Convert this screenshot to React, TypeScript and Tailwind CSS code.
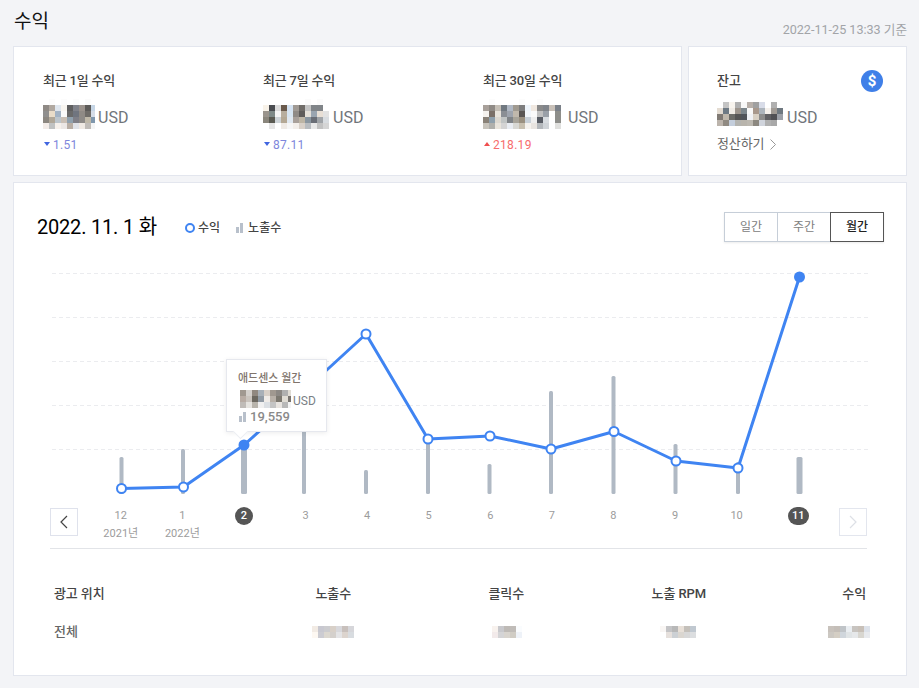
const FONT = "[font-family:Roboto,'Noto_Sans_CJK_KR','Noto_Sans',sans-serif]";

function Mosaic({ rows, className = "" }: { rows: string[]; className?: string }) {
  const parsed = rows.map((r) => r.split(" "));
  return (
    <div className={`flex flex-col shrink-0 overflow-hidden ${className}`}>
      {parsed.map((cells, i) => (
        <div key={i} className="flex">
          {cells.map((c, j) => (
            <div key={j} className="w-[6px] h-[6px] shrink-0" style={{ backgroundColor: `#${c}` }} />
          ))}
        </div>
      ))}
    </div>
  );
}

const m1 = [
  "fff fcfcfc fff fcfcfc fff fcfcfc fff fbfbfb fff",
  "8f8a85 b0a8a0 dfe6ee f8f5f0 5f5f60 80828a 9a928c 5c5a58 c5d5e5",
  "908f8e e9dcc8 a3b3c4 fafafa 6a6a6a 70757f 8f8a85 6f6c68 d5dde8",
  "8c8780 b0a798 bcc5cc c9bfb5 8fa0ad 7f7f87 8d8a87 bfb8a8 7f97ad",
  "f3ece8 c0c2c2 f5f0eb ebe7e5 b8aea5 dfe2e8 efe9e3 c0bcb8 f5f5f5",
];
const m2 = [
  "fff fff fff fff fff fff fff fbfbfb fff fbfbfb fff",
  "f8f2e8 4a4c50 dcdcdc 6a5a4c d5e3f2 a09a94 706c68 c4c4c4 808488 808488 fff",
  "9a948c 7f8a88 f5f5f5 b8ae9e d8e6f2 8f8a85 5f5c5a e5e0d8 9aa5b0 e8dfd5 e2e2e2",
  "8a867c 5a5a52 ced4d8 b4a894 e0e8f0 a8a09a bdb5a5 8a96a0 6a6e76 a0a4a8 d8dce0",
  "fff e5e5e5 fff efeae5 f6f6f6 f2eeea d8d0c8 b8bcc0 e8e8e8 c2c2c2 d5d5d5",
];
const m3 = [
  "fff fcfcfc fff fff fff fff fcfcfc fff fff fcfcfc fff fff fff",
  "a8a09a 8f8a85 c5bfb6 707880 b0b8c4 a09a90 7d7d7d eef4fa f0e8e0 8a8a8a 80848a c8c0b8 7a8088",
  "f5f2ee 7a7068 e8e4dc 8a8e94 9ea4ae c0b8ac 5a5654 f2f6fa fafafa c0c0c0 9aa0a8 fff 8e8e8a",
  "8a8278 8fa0ac dcd8d0 c0c4c4 808488 a8a49a 9a9080 c8d0d8 eeeeee 585c64 d8dce0 fff 8e8e8a",
  "c8c4bc b0b0ac e8e4dc d4d4d4 e8ecf2 d8d8d4 c8c0b0 f5f2ee e8e4e0 b4b8bc d0d4d8 fff e0e0de",
];
const m4 = [
  "fff c4c4c4 f8f4ee b0b0b0 f8f8f8 b8b0aa a0a0a0 d8dce8 fff b0b0b0 fff",
  "e4dcd2 6e7a84 f0ece6 9c948c 7c868c f8f8f8 a8988c acb4bc f4f0ec a09a94 6e7880",
  "807a74 c0b8ac 6c6c68 545454 50545a f0f2f6 d8d0c4 8c8c8c 606064 505054 9ca0a8",
  "bcb4ac 908a82 c4cedc b4b4b0 b8b4ac bcb8b0 8c8880 d0d4dc b0b0b0 a8a8a8 fff",
];
const mTip = [
  "a09890 d4d0cc 908880 a8b0b8 d8d0c8 a09890 8c8884 b0b0b0 e0dcd4",
  "b8aca4 cac4be 6c6860 909aa4 f0ece8 b8b0a8 7c7870 e0dcd4 787470",
  "c0bcb8 e6e4e0 b8b4ac f0f0f0 dce0e4 c4c4c4 e8e4e0 b8b8b8 f4f4f4",
];
const t1 = ["f2ebe4 c8c8d0 cccccf d8d0c8 d8d8dc c8c0bc d6d6da", "fdf8f2 ccccd2 dcd8d0 d4d0cc e4e4e6 dcd4ce d8dce0"];
const t2 = ["f8f2ee c8c8cc bebab6 c0bcb8 fafcfe", "f2eaea d4d4d6 d8d4ce d0ccc4 eef2f8"];
const t3 = ["f9f6f4 c4c4c6 b8b8b8 e8e0d8 c4c0ba c0c8d0", "fff e6e0dc ccd0d4 dad6d0 d8d8d8 dcdee0"];
const t4 = ["c8c2bc c4beb8 c0c4c8 eaeef2 c8c4c0 c8c0b8 dde2ea", "ccc8c2 d4cec4 d0d6dc e0e4e6 e6e8ea d8d6d0 e8eaee"];

function Tri({ up, className }: { up?: boolean; className: string }) {
  return (
    <svg width="6" height="4" viewBox="0 0 6 4" className={className}>
      <path d={up ? "M3 0L6 4H0Z" : "M0 0H6L3 4Z"} fill="currentColor" />
    </svg>
  );
}

function Stat({ title, rows, mw, gap, delta, up, w }: { title: string; rows: string[]; mw?: string; gap: string; delta: string; up?: boolean; w: string }) {
  return (
    <div className={`flex flex-col ${w}`}>
      <div className="text-[13px] leading-[20px] font-medium tracking-[-0.2px] text-[#444444]">{title}</div>
      <div className="flex items-center mt-[8px] h-[30px]">
        <Mosaic rows={rows} className={mw} />
        <span className={`text-[16px] leading-[20px] text-[#70757a] mt-[8px] ${gap}`}>USD</span>
      </div>
      <div className={`flex items-center gap-[3px] mt-[7px] text-[12px] leading-[18px] tracking-[0.3px] ${up ? "text-[#f76c6c]" : "text-[#7e86dc]"}`}>
        <Tri up={up} className={up ? "text-[#f04f4f] mb-[2px] ml-[1px]" : "text-[#4166e0] mb-[2px] ml-[1px]"} />
        <span>{delta}</span>
      </div>
    </div>
  );
}

const pts: [number, number][] = [
  [71.5, 226.5], [133.5, 225], [194, 183], [255, 128], [316, 72], [378, 177],
  [440, 174], [501, 187], [564, 169.5], [626, 199], [688, 206], [749.5, 15],
];
const bars: [number, number, number][] = [
  [71.5, 195, 4], [133, 187, 4], [194, 183, 6], [254, 168, 4], [316, 208, 4], [378, 178, 4],
  [439.5, 202, 4], [501, 129, 4], [563.5, 114, 4], [625.5, 182, 4], [688, 200, 4], [749.5, 195, 6],
];

function Chart() {
  return (
    <svg width="818" height="240" viewBox="0 0 818 240" className="block">
      {[11, 55, 99, 143, 187].map((y) => (
        <line key={y} x1="2" x2="818" y1={y + 0.5} y2={y + 0.5} stroke="#ebecef" strokeDasharray="4 3" />
      ))}
      {bars.map(([x, top, w], i) => (
        <rect key={i} x={x - w / 2} y={top} width={w} height={232 - top} rx="1.5" fill="#b0b9c4" />
      ))}
      <polyline points={pts.map((p) => p.join(",")).join(" ")} fill="none" stroke="#3f84f2" strokeWidth="3" strokeLinejoin="round" />
      {pts.map(([x, y], i) =>
        i === 3 ? null : i === 2 || i === 11 ? (
          <circle key={i} cx={x} cy={y} r="5.5" fill="#3f84f2" />
        ) : (
          <circle key={i} cx={x} cy={y} r="4.5" fill="#fff" stroke="#3f84f2" strokeWidth="2" />
        )
      )}
    </svg>
  );
}

function Chevron({ left, color }: { left?: boolean; color: string }) {
  return (
    <svg width="8" height="14" viewBox="0 0 8 14" fill="none" stroke={color} strokeWidth="1.2">
      <path d={left ? "M7 1L1 7L7 13" : "M1 1L7 7L1 13"} />
    </svg>
  );
}

const labels: { n: string; y?: string; active?: boolean }[] = [
  { n: "12", y: "2021년" }, { n: "1", y: "2022년" }, { n: "2", active: true }, { n: "3" }, { n: "4" }, { n: "5" },
  { n: "6" }, { n: "7" }, { n: "8" }, { n: "9" }, { n: "10" }, { n: "11", active: true },
];

const cols = [
  { t: "노출수", w: "w-[297px]", rows: t1, m: "-mr-[3px]" },
  { t: "클릭수", w: "w-[173px]", rows: t2, m: "mr-[2px]" },
  { t: "노출 RPM", w: "w-[182px]", rows: t3, m: "mr-[10px]" },
  { t: "수익", w: "w-[160px]", rows: t4, m: "-mr-[4px]" },
];

export default function App() {
  return (
    <div className={`${FONT} w-[919px] h-[688px] overflow-hidden bg-[#f3f4f7] pl-[13px] pr-[12px] flex flex-col`}>
      <div className="flex justify-between h-[46px] shrink-0">
        <h1 className="text-[19px] leading-[28px] pt-[8px] pl-[1px] font-normal text-[#111111]">수익</h1>
        <span className="text-[12.6px] leading-[18px] pt-[21px] text-[#a2a4a8]">2022-11-25 13:33 기준</span>
      </div>

      <div className="flex gap-[6px] h-[130px] shrink-0">
        <div className="w-[669px] bg-white border border-[#e3e6ee] pl-[29px] pt-[24px] flex">
          <Stat title="최근 1일 수익" rows={m1} mw="w-[52px]" gap="ml-[3px]" delta="1.51" w="w-[220px]" />
          <Stat title="최근 7일 수익" rows={m2} gap="ml-[4px]" delta="87.11" w="w-[220px]" />
          <Stat title="최근 30일 수익" rows={m3} gap="ml-[7px]" delta="218.19" up w="w-[180px]" />
        </div>
        <div className="relative w-[219px] bg-white border border-[#e3e6ee] pl-[28px] pt-[24px] flex flex-col">
          <div className="text-[13px] leading-[20px] font-medium text-[#444444]">잔고</div>
          <div className="flex items-center mt-[8px] h-[30px]">
            <Mosaic rows={m4} />
            <span className="text-[16px] leading-[20px] text-[#70757a] ml-[4px] mt-[8px]">USD</span>
          </div>
          <div className="flex items-center gap-[6px] mt-[6px] text-[13px] leading-[18px] tracking-[-0.1px] text-[#666666]">
            <span>정산하기</span>
            <svg width="6" height="11" viewBox="0 0 6 11" fill="none" stroke="#999999" strokeWidth="1">
              <path d="M0.5 0.5L5.5 5.5L0.5 10.5" />
            </svg>
          </div>
          <div className="absolute right-[23px] top-[23px] w-[22px] h-[22px] rounded-full bg-[#3f7fe8] flex items-center justify-center text-white text-[15px] font-bold leading-none">
            $
          </div>
        </div>
      </div>

      <div className="mt-[6px] h-[494px] shrink-0 bg-white border border-[#e3e6ee] flex flex-col">
        <div className="flex items-center h-[30px] mt-[29px] ml-[23px] mr-[22px] shrink-0">
          <div className="text-[20px] leading-[30px] text-black tracking-[-0.2px] w-[148px]">2022. 11. 1 화</div>
          <div className="flex items-center gap-[3px] text-[12px] font-medium text-[#444444] mt-[1px]">
            <span className="w-[10px] h-[10px] rounded-full border-2 border-[#3f84f2]" />
            <span>수익</span>
          </div>
          <div className="flex items-center gap-[5px] text-[12px] font-medium text-[#444444] ml-[16px] mt-[1px]">
            <span className="flex items-end gap-[1px]">
              <span className="w-[3px] h-[6px] bg-[#b8c0cb]" />
              <span className="w-[3px] h-[10px] bg-[#b8c0cb]" />
            </span>
            <span>노출수</span>
          </div>
          <div className="ml-auto flex text-[12px] h-[30px] shadow-[0_1px_2px_rgba(0,0,0,0.08)]">
            <div className="w-[54px] border border-[#c6ced8] flex items-center justify-center text-[#808080]">일간</div>
            <div className="w-[53px] -ml-px border border-[#c6ced8] border-r-0 flex items-center justify-center text-[#808080]">주간</div>
            <div className="w-[54px] border border-[#555555] flex items-center justify-center font-medium text-[#222222]">월간</div>
          </div>
        </div>

        <div className="relative mt-[20px] ml-[36px] w-[818px] h-[240px] shrink-0">
          <Chart />
          <div className="absolute left-[176px] top-[97px] w-[101px] h-[73px] bg-white border border-[#e6e8ee] shadow-[0_1px_5px_rgba(0,0,0,0.08)] pl-[11px] pt-[10px]">
            <div className="text-[11px] leading-[18px] font-medium text-[#80746c]">애드센스 월간</div>
            <div className="flex mt-[2px]">
              <Mosaic rows={mTip} className="w-[51px] ml-[2px]" />
              <span className="text-[12px] leading-[14px] text-[#7a7f86] ml-[2px] self-end">USD</span>
            </div>
            <div className="flex items-center gap-[4px] ml-[1px] text-[13px] leading-[14px] font-medium text-[#8a8a8a] mt-[2px]">
              <span className="flex items-end gap-[1px]">
                <span className="w-[3px] h-[6px] bg-[#b8c0cb]" />
                <span className="w-[3px] h-[10px] bg-[#b8c0cb]" />
              </span>
              <span>19,559</span>
            </div>
            <div className="absolute left-[8px] -bottom-[6px] w-[11px] h-[11px] rotate-45 bg-white border-r border-b border-[#eceef2]" />
          </div>
        </div>

        <div className="flex ml-[36px] w-[817px] mt-[6px] shrink-0">
          <div className="w-[28px] h-[28px] bg-white border border-[#dfe2ec] flex items-center justify-center shrink-0">
            <Chevron left color="#444444" />
          </div>
          <div className="grid grid-cols-12 w-[739px] ml-[12px] -mt-[1px] text-[11px] leading-[18px] text-[#9c9c9c]">
            {labels.map((l) => (
              <div key={l.n} className="flex flex-col items-center whitespace-nowrap">
                {l.active ? (
                  <span className={`h-[18px] rounded-full bg-[#555555] text-white font-medium flex items-center justify-center ${l.n === "2" ? "w-[18px]" : "w-[21px]"}`}>
                    {l.n}
                  </span>
                ) : (
                  <span>{l.n}</span>
                )}
                {l.y && <span>{l.y}</span>}
              </div>
            ))}
          </div>
          <div className="ml-auto w-[28px] h-[28px] bg-white border border-[#e3e6ee] flex items-center justify-center shrink-0">
            <Chevron color="#dde0e6" />
          </div>
        </div>

        <div className="ml-[36px] w-[817px] mt-[5px] border-t border-[#e2e4e8] shrink-0" />

        <div className="ml-[40px] mt-[35px] flex text-[13px] leading-[20px] font-medium tracking-[-0.1px] text-[#444444]">
          <div className="w-[0px] whitespace-nowrap">광고 위치</div>
          {cols.map((c) => (
            <div key={c.t} className={`${c.w} text-right`}>{c.t}</div>
          ))}
        </div>
        <div className="ml-[40px] mt-[18px] flex items-center text-[13px] leading-[20px] font-medium text-[#666666]">
          <div className="w-[0px] whitespace-nowrap">전체</div>
          {cols.map((c) => (
            <div key={c.t} className={`${c.w} flex justify-end`}>
              <Mosaic rows={c.rows} className={c.m} />
            </div>
          ))}
        </div>
      </div>
    </div>
  );
}
